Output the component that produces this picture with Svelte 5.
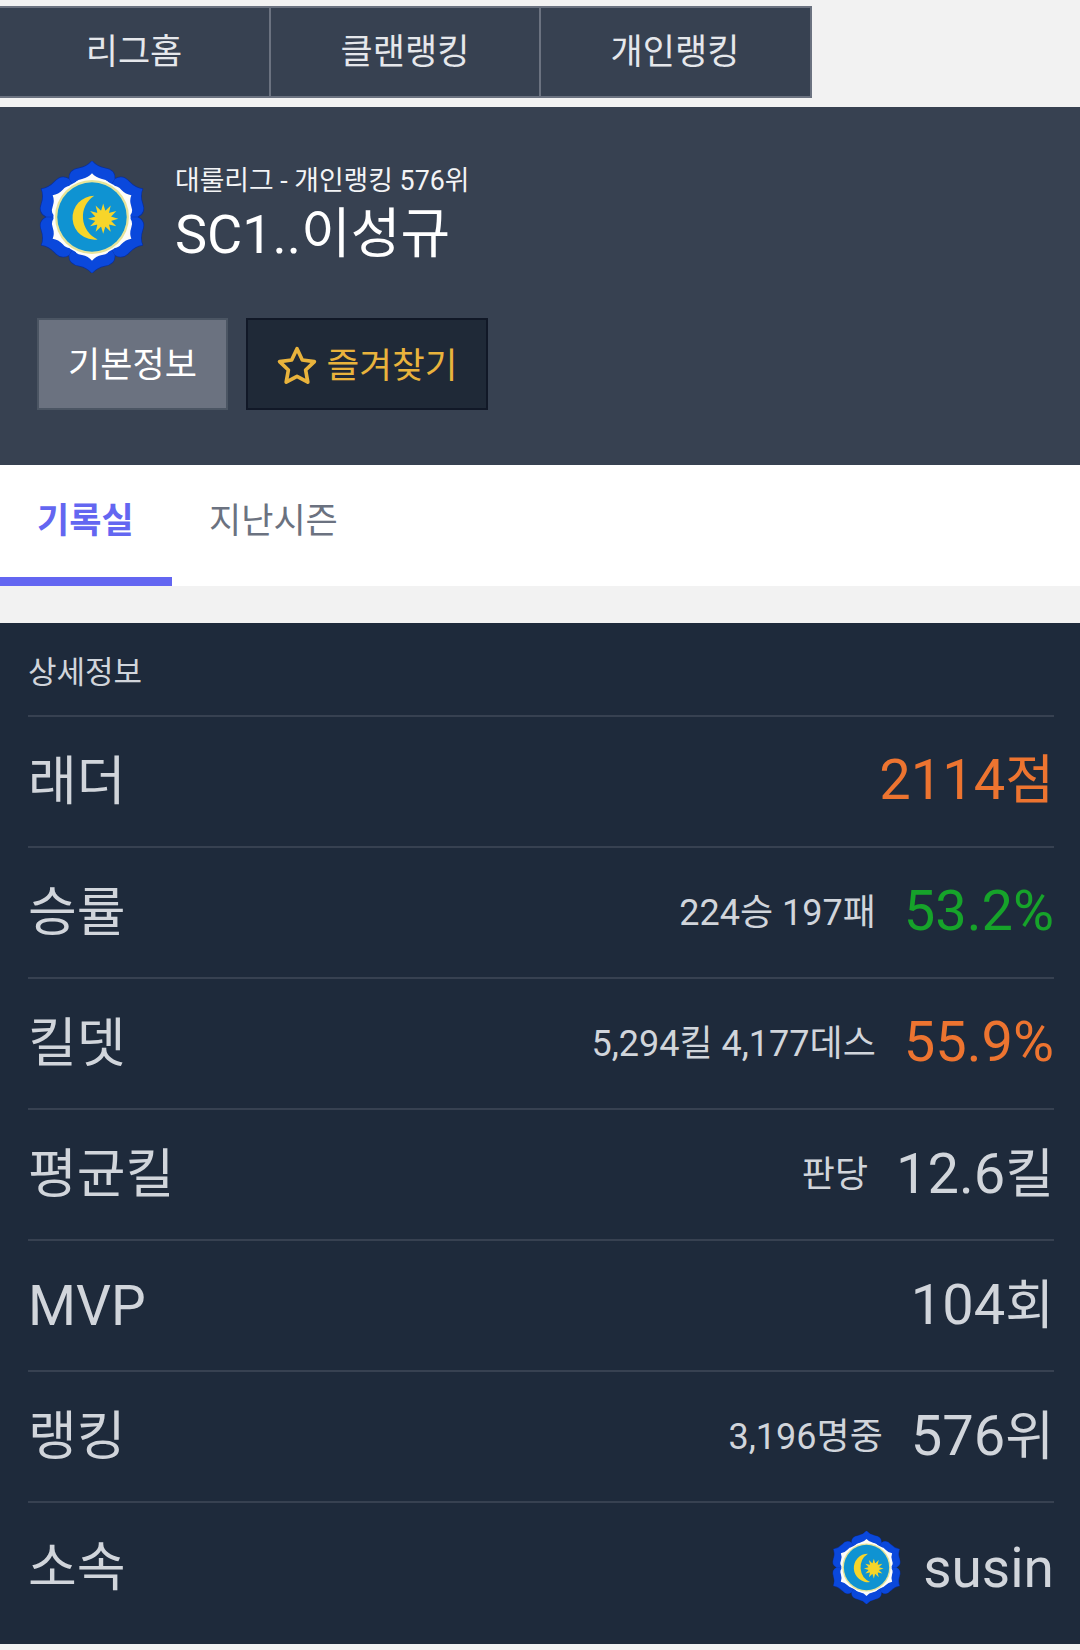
<script lang="ts">
	interface Row {
		label: string;
		sub?: string;
		value: string;
		unit?: string;
		tone?: string;
	}

	const navItems = ['리그홈', '클랜랭킹', '개인랭킹'];

	const rows: Row[] = [
		{ label: '래더', value: '2114', unit: '점', tone: 'orange' },
		{ label: '승률', sub: '224승 197패', value: '53.2%', tone: 'green' },
		{ label: '킬뎃', sub: '5,294킬 4,177데스', value: '55.9%', tone: 'orange' },
		{ label: '평균킬', sub: '판당', value: '12.6', unit: '킬' },
		{ label: 'MVP', value: '104', unit: '회' },
		{ label: '랭킹', sub: '3,196명중', value: '576', unit: '위' }
	];

	const lobes = Array.from({ length: 6 }, (_, i) => i * 60);
	const rays = Array.from({ length: 12 }, (_, i) => i * 30);
	const lobe = 'M50 0 Q54 5 61 6.5 Q70 8 69.5 16 L50 50 L30.5 16 Q30 8 39 6.5 Q46 5 50 0 Z';
</script>

{#snippet emblem(size: number)}
	<svg class="emblem" width={size} height={size} viewBox="0 0 100 100">
		<g transform="translate(50 50) scale(1.04 1) translate(-50 -50)">
			<g fill="#0a48dc" stroke="#0a2f9a" stroke-width="1.2" stroke-linejoin="round">
				{#each lobes as a (a)}
					<path transform="rotate({a} 50 50)" d={lobe} />
				{/each}
			</g>
			<g fill="#0a48dc">
				{#each lobes as a (a)}
					<path transform="rotate({a} 50 50)" d={lobe} />
				{/each}
			</g>
			<g fill="#fdfdfa" transform="translate(50 50) scale(.78) translate(-50 -50)">
				{#each lobes as a (a)}
					<path transform="rotate({a} 50 50)" d={lobe} />
				{/each}
			</g>
		</g>
		<circle cx="50" cy="50" r="34.5" fill="#fdfdfa" />
		<circle cx="50" cy="50" r="33" fill="#e6e49a" />
		<circle cx="50" cy="50" r="31" fill="#0f93d2" />
		<path d="M52 31 A19.6 19.6 0 1 0 55 70 A22.3 22.3 0 0 1 52 31 Z" fill="#f7d52a" />
		<g fill="#f7d52a" transform="translate(60 51.5)">
			{#each rays as a (a)}
				<path transform="rotate({a})" d="M-2.2 -6 L0 -13.5 L2.2 -6 Z" />
			{/each}
			<circle r="7.5" />
		</g>
	</svg>
{/snippet}

<div class="page">
	<nav class="league-nav">
		{#each navItems as item (item)}
			<div class="nav-item">{item}</div>
		{/each}
	</nav>

	<header class="profile">
		<div class="identity">
			{@render emblem(112)}
			<div class="names">
				<div class="rank-line">대룰리그 - 개인랭킹 576위</div>
				<div class="player">SC1..이성규</div>
			</div>
		</div>
		<div class="actions">
			<button class="btn basic">기본정보</button>
			<button class="btn fav">
				<svg width="44" height="44" viewBox="0 0 24 24" fill="none" stroke="currentColor" stroke-width="2" stroke-linejoin="round">
					<path d="M12 2.6l2.9 6.1 6.6.9-4.8 4.6 1.2 6.6-5.9-3.2-5.9 3.2 1.2-6.6-4.8-4.6 6.6-.9z" />
				</svg>
				즐겨찾기
			</button>
		</div>
	</header>

	<div class="tabs">
		<div class="tab active">기록실</div>
		<div class="tab">지난시즌</div>
	</div>

	<section class="detail">
		<div class="detail-title">상세정보</div>
		{#each rows as row (row.label)}
			<div class="row">
				<span class="label" class:latin={row.label === 'MVP'}>{row.label}</span>
				<span class="right">
					{#if row.sub}<span class="sub">{row.sub}</span>{/if}
					<span class="value {row.tone ?? ''}">{row.value}{#if row.unit}<span class="unit">{row.unit}</span>{/if}</span>
				</span>
			</div>
		{/each}
		<div class="row last">
			<span class="label">소속</span>
			<span class="right clan">
				{@render emblem(73)}
				<span class="value latin">susin</span>
			</span>
		</div>
	</section>
</div>

<style>
	:global(body) {
		background: #f2f2f2;
	}

	.page {
		width: 1080px;
		height: 1650px;
		padding-top: 6px;
		box-sizing: border-box;
		background: #f2f2f2;
		font-family: Roboto, 'Noto Sans CJK KR', sans-serif;
		overflow: hidden;
	}

	.league-nav {
		display: grid;
		grid-template-columns: repeat(3, 270px);
		width: 813px;
		height: 92px;
		margin-left: -1px;
		margin-bottom: 9px;
		box-sizing: border-box;
		background: #374151;
		border: 2px solid #6b7280;
		border-left: 0;
	}

	.nav-item {
		display: flex;
		align-items: center;
		justify-content: center;
		padding-top: 2px;
		font-size: 35px;
		line-height: 44px;
		color: #e5e7eb;
		border-left: 2px solid #6b7280;
	}

	.nav-item:first-child {
		border-left: 0;
	}

	.profile {
		height: 358px;
		box-sizing: border-box;
		padding: 54px 37px 0;
		background: #374151;
	}

	.identity {
		display: flex;
		align-items: center;
		gap: 27px;
		margin-left: -1px;
	}

	.emblem {
		flex: none;
		display: block;
	}

	.names {
		display: flex;
		flex-direction: column;
		gap: 4px;
		padding-bottom: 4px;
	}

	.rank-line {
		font-size: 26.8px;
		line-height: 36px;
		color: #f3f4f6;
	}

	.player {
		font-size: 54px;
		line-height: 64px;
		color: #fff;
	}

	.actions {
		display: flex;
		gap: 18px;
		margin-top: 45px;
	}

	.btn {
		display: flex;
		align-items: center;
		justify-content: center;
		gap: 8px;
		height: 92px;
		padding: 4px 0 0;
		font: inherit;
		font-size: 35px;
		line-height: 44px;
		border-radius: 0;
	}

	.basic {
		width: 191px;
		background: #6b7280;
		border: 2px solid #4b5563;
		color: #fff;
	}

	.fav {
		width: 242px;
		padding-right: 2px;
		font-size: 35.6px;
		background: #1f2937;
		border: 2px solid #111827;
		color: #e9b33c;
	}

	.tabs {
		display: flex;
		height: 121px;
		background: #fff;
		margin-bottom: 37px;
	}

	.tab {
		padding: 0 37px 8px;
		display: flex;
		align-items: center;
		font-size: 35px;
		color: #6b7280;
		box-sizing: border-box;
		border-bottom: 9px solid transparent;
	}

	.tab.active {
		width: 172px;
		padding-right: 0;
		font-weight: 700;
		color: #6366f1;
		border-bottom-color: #6366f1;
	}

	.detail {
		height: 1021px;
		box-sizing: border-box;
		padding: 0 26px 0 28px;
		background: #1e2a3b;
		color: #d1d5db;
	}

	.detail-title {
		height: 92px;
		display: flex;
		align-items: center;
		font-size: 31px;
	}

	.row {
		display: flex;
		align-items: center;
		justify-content: space-between;
		height: 131px;
		box-sizing: border-box;
		border-top: 2px solid #374151;
	}

	.label,
	.unit {
		font-size: 53px;
		line-height: 64px;
	}

	.value {
		font-size: 56px;
		line-height: 64px;
	}

	.value.orange,
	.value.green {
		padding-bottom: 3px;
	}

	.label.latin,
	.value.latin {
		font-size: 55px;
	}

	.right {
		display: flex;
		align-items: center;
		gap: 28px;
	}

	.sub {
		font-size: 36px;
		line-height: 44px;
	}

	.value.orange {
		color: #ed7430;
	}

	.value.green {
		color: #16a32a;
	}

	.clan {
		gap: 20px;
	}
</style>
